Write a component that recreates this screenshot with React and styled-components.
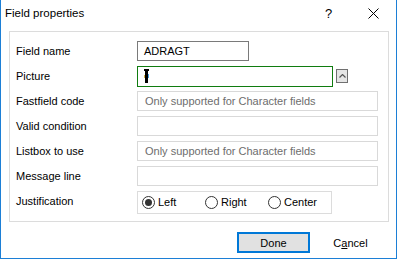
import styled, { createGlobalStyle } from "styled-components";

const GlobalStyle = createGlobalStyle`
  html, body {
    margin: 0;
    padding: 0;
    background: #ffffff;
  }
  * {
    box-sizing: border-box;
  }
`;

const Window = styled.div`
  width: 397px;
  height: 259px;
  background: #ffffff;
  border: 1px solid #1c7fd6;
  border-top: none;
  display: flex;
  flex-direction: column;
  font-family: "Liberation Sans", Arial, sans-serif;
  font-size: 11px;
  color: #000000;
  overflow: hidden;
`;

const TitleBar = styled.div`
  height: 31px;
  display: flex;
  align-items: center;
`;

const Title = styled.div`
  flex: 1;
  padding-left: 4px;
  padding-bottom: 5px;
  font-size: 11.5px;
`;

const TitleButton = styled.div`
  width: 45px;
  height: 30px;
  display: flex;
  align-items: center;
  justify-content: center;
  padding-bottom: 5px;
  font-size: 13px;
`;

const Body = styled.div`
  padding: 0 7px 0 8px;
`;

const Group = styled.div`
  height: 191px;
  border: 1px solid #dcdcdc;
  padding: 9px 0 0 6px;
  display: grid;
  grid-template-columns: 121px 1fr;
  grid-auto-rows: 20px;
  row-gap: 5px;
  align-items: center;
`;

const Label = styled.div`
  line-height: 20px;
`;

const InputRow = styled.div`
  display: flex;
  align-items: center;
  gap: 3px;
`;

const TextBox = styled.div`
  width: ${(p) => p.$width}px;
  height: ${(p) => (p.$focused ? 21 : 20)}px;
  border: 1px solid ${(p) => (p.$focused ? "#107c10" : p.$disabled ? "#d9d9d9" : "#7a7a7a")};
  background: #ffffff;
  color: ${(p) => (p.$disabled ? "#6d6d6d" : "#000000")};
  padding-left: ${(p) => (p.$disabled ? 7 : 6)}px;
  display: flex;
  align-items: center;
  white-space: nowrap;
`;

const SpinButton = styled.div`
  width: 12px;
  height: 14px;
  border: 1px solid #707070;
  background: #e5e5e5;
  display: flex;
  align-items: center;
  justify-content: center;
`;

const RadioGroup = styled.div`
  width: 195px;
  height: 23px;
  border: 1px solid #dcdcdc;
  display: flex;
  align-items: center;
  padding-left: 4px;
  margin-top: 2px;
`;

const RadioOption = styled.div`
  width: 63px;
  display: flex;
  align-items: center;
  gap: 3px;
`;

const RadioCircle = styled.div`
  width: 13px;
  height: 13px;
  border-radius: 50%;
  border: 1px solid #333333;
  display: flex;
  align-items: center;
  justify-content: center;
  &::after {
    content: "";
    width: 7px;
    height: 7px;
    border-radius: 50%;
    background: ${(p) => (p.$checked ? "#333333" : "transparent")};
  }
`;

const Footer = styled.div`
  display: flex;
  justify-content: flex-end;
  gap: 4px;
  padding: 10px 9px 0 0;
`;

const Button = styled.div`
  width: 73px;
  height: 21px;
  display: flex;
  align-items: center;
  justify-content: center;
  background: ${(p) => (p.$default ? "#e1e1e1" : "#ffffff")};
  border: 2px solid ${(p) => (p.$default ? "#0078d7" : "transparent")};
`;

const Mnemonic = styled.span`
  text-decoration: underline;
`;

function IBeam() {
  return (
    <svg width="6" height="14" viewBox="0 0 6 14">
      <rect x="0" y="0" width="5" height="2" fill="#000" />
      <rect x="1" y="0" width="3" height="14" fill="#000" />
      <rect x="4" y="5" width="1" height="4" fill="#4aa0e0" />
      <rect x="0" y="6" width="1" height="3" fill="#d4b040" />
    </svg>
  );
}

function Radio({ label, checked }) {
  return (
    <RadioOption>
      <RadioCircle $checked={checked} />
      <span>{label}</span>
    </RadioOption>
  );
}

export default function App() {
  return (
    <>
      <GlobalStyle />
      <Window>
        <TitleBar>
          <Title>Field properties</Title>
          <TitleButton>?</TitleButton>
          <TitleButton>
            <svg width="11" height="11" viewBox="0 0 11 11">
              <path d="M0.5 0.5 L10.5 10.5 M10.5 0.5 L0.5 10.5" stroke="#000" strokeWidth="1" />
            </svg>
          </TitleButton>
        </TitleBar>
        <Body>
          <Group>
            <Label>Field name</Label>
            <InputRow>
              <TextBox $width={112}>ADRAGT</TextBox>
            </InputRow>

            <Label>Picture</Label>
            <InputRow>
              <TextBox $width={196} $focused>
                <IBeam />
              </TextBox>
              <SpinButton>
                <svg width="7" height="4" viewBox="0 0 7 4">
                  <path d="M0.5 3.5 L3.5 0.5 L6.5 3.5" stroke="#555" strokeWidth="1.2" fill="none" />
                </svg>
              </SpinButton>
            </InputRow>

            <Label>Fastfield code</Label>
            <InputRow>
              <TextBox $width={241} $disabled>Only supported for Character fields</TextBox>
            </InputRow>

            <Label>Valid condition</Label>
            <InputRow>
              <TextBox $width={241} $disabled />
            </InputRow>

            <Label>Listbox to use</Label>
            <InputRow>
              <TextBox $width={241} $disabled>Only supported for Character fields</TextBox>
            </InputRow>

            <Label>Message line</Label>
            <InputRow>
              <TextBox $width={241} $disabled />
            </InputRow>

            <Label>Justification</Label>
            <RadioGroup>
              <Radio label="Left" checked />
              <Radio label="Right" />
              <Radio label="Center" />
            </RadioGroup>
          </Group>
        </Body>
        <Footer>
          <Button $default>Done</Button>
          <Button>
            <span>
              C<Mnemonic>a</Mnemonic>ncel
            </span>
          </Button>
        </Footer>
      </Window>
    </>
  );
}
